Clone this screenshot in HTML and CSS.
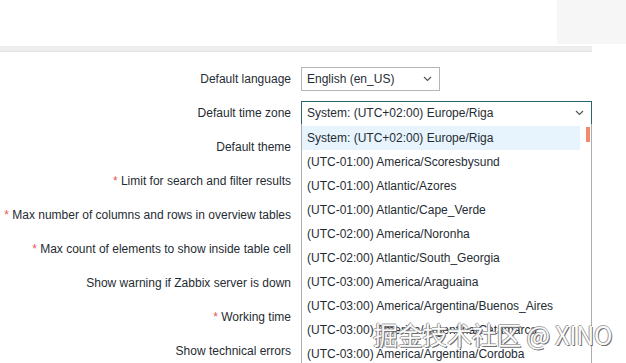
FILE: index.html
```html
<!DOCTYPE html>
<html lang="en">
<head>
    <meta charset="UTF-8">
    <title>GUI settings</title>
    <link rel="stylesheet" href="styles.css">
</head>
<body>

    <div class="header">
        <div class="header-side"></div>
    </div>
    <div class="header-bar"></div>

    <div class="form">
        <div class="form-row">
            <label class="form-label">Default language</label>
            <div class="form-field">
                <div class="select select-lang">
                    <span>English (en_US)</span>
                    <svg class="caret" width="9" height="6" viewBox="0 0 9 6"><path d="M1 1 L4.5 4.5 L8 1" fill="none" stroke="#555" stroke-width="1.2"/></svg>
                </div>
            </div>
        </div>
        <div class="form-row">
            <label class="form-label">Default time zone</label>
            <div class="form-field field-tz">
                <div class="select select-tz focused">
                    <span>System: (UTC+02:00) Europe/Riga</span>
                    <svg class="caret" width="9" height="6" viewBox="0 0 9 6"><path d="M1 1 L4.5 4.5 L8 1" fill="none" stroke="#555" stroke-width="1.2"/></svg>
                </div>

                <!-- open list of the time zone select -->
                <div class="dropdown">
                    <ul class="options">
                        <li class="hover">System: (UTC+02:00) Europe/Riga</li>
                        <li>(UTC-01:00) America/Scoresbysund</li>
                        <li>(UTC-01:00) Atlantic/Azores</li>
                        <li>(UTC-01:00) Atlantic/Cape_Verde</li>
                        <li>(UTC-02:00) America/Noronha</li>
                        <li>(UTC-02:00) Atlantic/South_Georgia</li>
                        <li>(UTC-03:00) America/Araguaina</li>
                        <li>(UTC-03:00) America/Argentina/Buenos_Aires</li>
                        <li>(UTC-03:00) America/Argentina/Catamarca</li>
                        <li>(UTC-03:00) America/Argentina/Cordoba</li>
                    </ul>
                    <div class="scrollbar"><div class="thumb"></div></div>
                </div>
            </div>
        </div>
        <div class="form-row">
            <label class="form-label">Default theme</label>
            <div class="form-field"></div>
        </div>
        <div class="form-row">
            <label class="form-label"><span class="req">*</span> Limit for search and filter results</label>
            <div class="form-field"></div>
        </div>
        <div class="form-row">
            <label class="form-label"><span class="req">*</span> Max number of columns and rows in overview tables</label>
            <div class="form-field"></div>
        </div>
        <div class="form-row">
            <label class="form-label"><span class="req">*</span> Max count of elements to show inside table cell</label>
            <div class="form-field"></div>
        </div>
        <div class="form-row">
            <label class="form-label">Show warning if Zabbix server is down</label>
            <div class="form-field"></div>
        </div>
        <div class="form-row">
            <label class="form-label"><span class="req">*</span> Working time</label>
            <div class="form-field"></div>
        </div>
        <div class="form-row">
            <label class="form-label">Show technical errors</label>
            <div class="form-field"></div>
        </div>
    </div>

    <div class="watermark">掘金技术社区 @ XINO</div>

</body>
</html>
```

FILE: styles.css
```css
body {
    margin: 0;
    padding: 0;
    background-color: #ffffff;
    font-family: "Liberation Sans", Arial, sans-serif;
    font-size: 12px;
    color: #1f2c33;
    overflow: hidden;
    height: 363px;
}
.header {
    height: 46px;
    display: flex;
    justify-content: flex-end;
}
.header-side {
    width: 69px;
    height: 44px;
    background-color: #f6f6f6;
}
.header-bar {
    width: 592px;
    height: 5px;
    background-color: #ededed;
    border-bottom: 1px solid #e2e2e2;
}
.form {
    padding-top: 10px;
}
.form-row {
    display: grid;
    grid-template-columns: 291px 1fr;
    column-gap: 10px;
    height: 34px;
    align-items: center;
}
.form-label {
    text-align: right;
    white-space: nowrap;
}
.req {
    color: #e45959;
}
.form-field {
    height: 24px;
}
.field-tz {
    position: relative;
}
.select {
    box-sizing: border-box;
    height: 24px;
    border: 1px solid #b5b5b5;
    background: #fff;
    display: flex;
    align-items: center;
    justify-content: space-between;
    padding: 0 7px 0 5px;
}
.select-lang {
    width: 139px;
}
.select-tz {
    width: 291px;
}
.select.focused {
    border-color: #2d6473;
}
.dropdown {
    position: absolute;
    top: 23px;
    left: 0;
    width: 291px;
    height: 240px;
    overflow: hidden;
    box-sizing: border-box;
    background: #fff;
    border: 1px solid #acacac;
    border-top: none;
    border-bottom: none;
    display: flex;
    padding-top: 2px;
}
.options {
    list-style: none;
    margin: 0;
    padding: 0;
    width: 278px;
}
.options li {
    height: 24px;
    line-height: 24px;
    padding-left: 5px;
    white-space: nowrap;
}
.options li.hover {
    background-color: #e8f4fd;
}
.scrollbar {
    margin-left: 6px;
    width: 4px;
}
.thumb {
    height: 15px;
    margin-top: 1px;
    background-color: #f08c6c;
}
.watermark {
    position: absolute;
    left: 373px;
    top: 316px;
    font-family: "Noto Sans CJK SC", "Liberation Sans", sans-serif;
    font-size: 25px;
    letter-spacing: -0.3px;
    color: #fafafa;
    white-space: nowrap;
    text-shadow: 1px 1px 0 #6f6f6f, -1px 0 0 #999, 0 -1px 0 #aaa;
}
```
